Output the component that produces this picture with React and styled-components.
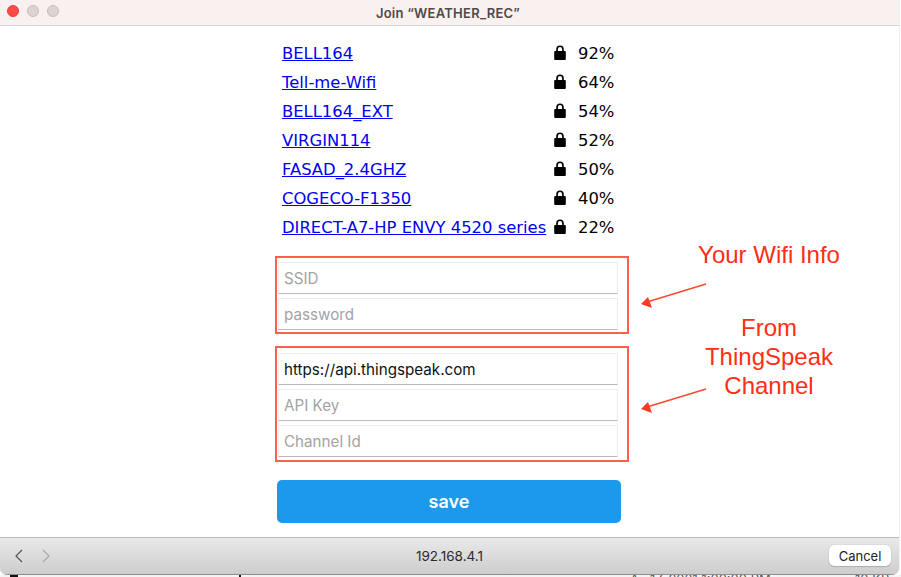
import React from 'react';
import styled, { createGlobalStyle } from 'styled-components';

const Global = createGlobalStyle`
  html, body { margin: 0; padding: 0; background: #fff; }
  body { width: 901px; height: 577px; overflow: hidden; font-family: "Inter", "Liberation Sans", sans-serif; }
`;

const Page = styled.div`
  position: relative;
  width: 901px;
  height: 577px;
  overflow: hidden;
  background: #fff;
`;

const Backdrop = styled.div`
  display: flex;
  height: 2px;
  overflow: hidden;
  background: #f4f4f4;
  font: 13px/8px "Inter", sans-serif;
  color: #555;
`;

const BackdropMark = styled.span`
  flex: 0 0 ${p => p.$w}px;
  margin-left: ${p => p.$ml}px;
  background: #111;
`;

const BackdropLabel = styled.span`
  flex: 0 0 ${p => p.$w}px;
  margin-left: ${p => p.$ml}px;
  white-space: nowrap;
`;

const Window = styled.div`
  width: 899px;
  height: 575px;
  display: flex;
  flex-direction: column;
  border-radius: 0 0 8px 8px;
  overflow: hidden;
  box-shadow: 0 0 1px rgba(0,0,0,.6);
`;

const TitleBar = styled.header`
  position: relative;
  flex: 0 0 26px;
  box-sizing: border-box;
  padding-right: 3px;
  display: flex;
  align-items: center;
  justify-content: center;
  background: #f9f1ef;
  border-bottom: 1px solid #d9d5d6;
  font: 600 13px "Inter", "Liberation Sans", sans-serif;
  letter-spacing: 0.25px;
  color: #4e4a4a;
`;

const Lights = styled.div`
  position: absolute;
  left: 7px;
  top: 5px;
  display: flex;
  gap: 8px;
`;

const Light = styled.span`
  width: 12px;
  height: 12px;
  box-sizing: border-box;
  border-radius: 50%;
  background: ${p => (p.$on ? '#fd4b46' : '#dbd4d3')};
  border: 1px solid ${p => (p.$on ? '#e5403b' : '#c4bdbc')};
`;

const Body = styled.main`
  flex: 1;
  background: #fff;
  display: flex;
  flex-direction: column;
  padding: 13px 0 0 277px;
`;

const NetworkList = styled.ul`
  list-style: none;
  margin: 0;
  padding: 0 0 0 5px;
`;

const Network = styled.li`
  display: grid;
  grid-template-columns: 272px 24px 1fr;
  align-items: center;
  height: 29px;
  font: 16.4px "DejaVu Sans", Verdana, sans-serif;
  color: #000;
`;

const NetworkLink = styled.a`
  color: #0000ee;
  text-decoration: underline;
  white-space: nowrap;
`;

const Lock = styled.svg`
  width: 12px;
  height: 15px;
  fill: #000;
  margin-top: -2px;
`;

const FieldGroup = styled.div`
  display: flex;
  flex-direction: column;
  gap: 4px;
  margin-top: ${p => p.$mt}px;
`;

const Field = styled.input`
  box-sizing: border-box;
  width: 340px;
  height: 32px;
  margin-left: 1px;
  padding: 0 5px;
  border: 1px solid #ececec;
  border-bottom: 1px solid #b9b9b9;
  border-radius: 1px;
  outline: none;
  font: 15.2px "Inter", "Liberation Sans", sans-serif;
  color: #111;
  &::placeholder { color: #a3a3a3; opacity: 1; }
`;

const SaveButton = styled.button`
  width: 344px;
  height: 43px;
  margin-top: 23px;
  border: 0;
  border-radius: 5px;
  background: #1c99ea;
  color: #fff;
  font: 600 18px "Inter", "Liberation Sans", sans-serif;
`;

const Footer = styled.footer`
  position: relative;
  flex: 0 0 38px;
  box-sizing: border-box;
  display: flex;
  align-items: center;
  justify-content: center;
  border-top: 1px solid #bdbdbd;
  border-bottom: 1px solid #8e8e8e;
  background: linear-gradient(#e9e9e9, #cdcdcd);
  font: 13.5px "Inter", "Liberation Sans", sans-serif;
  color: #2b2b2b;
`;

const NavButtons = styled.div`
  position: absolute;
  left: 14px;
  top: 11px;
  display: flex;
  gap: 17px;
`;

const Chevron = styled.svg`
  width: 10px;
  height: 14px;
  fill: none;
  stroke: ${p => p.$dim ? '#a9a9a9' : '#555'};
  stroke-width: 1.2;
`;

const CancelButton = styled.button`
  position: absolute;
  right: 8px;
  top: 7px;
  width: 62px;
  height: 21px;
  padding: 0;
  border: 0;
  border-radius: 5px;
  background: #fff;
  box-shadow: 0 0 1px rgba(0,0,0,.35), 0 1px 1px rgba(0,0,0,.15);
  font: 13px "Inter", "Liberation Sans", sans-serif;
  color: #222;
`;

const RedBox = styled.div`
  position: absolute;
  left: 275px;
  top: ${p => p.$top}px;
  width: 354px;
  height: ${p => p.$h}px;
  box-sizing: border-box;
  border: 2px solid #f9604d;
  pointer-events: none;
`;

const Note = styled.div`
  position: absolute;
  left: 670px;
  top: ${p => p.$top}px;
  width: 198px;
  text-align: center;
  font: 24px/29px "Liberation Sans", Arial, sans-serif;
  color: #ff2e14;
`;

const ArrowLayer = styled.svg`
  position: absolute;
  left: 630px;
  top: ${p => p.$top}px;
  width: 90px;
  height: 40px;
`;

const networks = [
  ['BELL164', '92%'],
  ['Tell-me-Wifi', '64%'],
  ['BELL164_EXT', '54%'],
  ['VIRGIN114', '52%'],
  ['FASAD_2.4GHZ', '50%'],
  ['COGECO-F1350', '40%'],
  ['DIRECT-A7-HP ENVY 4520 series', '22%'],
];

const Arrow = ({ top }) => (
  <ArrowLayer $top={top} viewBox="0 0 90 40">
    <line x1="76" y1="10" x2="17" y2="28" stroke="#ff4a33" strokeWidth="1.7" />
    <polygon points="11,30 18,23 22,34" fill="#ff3a22" />
  </ArrowLayer>
);

export default function App() {
  return (
    <Page>
      <Global />
      <Window>
        <TitleBar>
          <Lights>
            <Light $on />
            <Light />
            <Light />
          </Lights>
          Join “WEATHER_REC”
        </TitleBar>
        <Body>
          <NetworkList>
            {networks.map(([name, pct]) => (
              <Network key={name}>
                <NetworkLink href="#">{name}</NetworkLink>
                <Lock viewBox="0 0 12 15">
                  <path d="M2.2 6V4.2a3.8 3.8 0 0 1 7.6 0V6h1a1 1 0 0 1 1 1v7a1 1 0 0 1-1 1H1.2a1 1 0 0 1-1-1V7a1 1 0 0 1 1-1zM3.9 6h4.2V4.2a2.1 2.1 0 0 0-4.2 0z" />
                </Lock>
                <span>{pct}</span>
              </Network>
            ))}
          </NetworkList>
          <FieldGroup $mt={20}>
            <Field placeholder="SSID" />
            <Field placeholder="password" />
          </FieldGroup>
          <FieldGroup $mt={23}>
            <Field defaultValue="https://api.thingspeak.com" />
            <Field placeholder="API Key" />
            <Field placeholder="Channel Id" />
          </FieldGroup>
          <SaveButton>save</SaveButton>
        </Body>
        <Footer>
          <NavButtons>
            <Chevron viewBox="0 0 10 14"><path d="M8 1 2 7l6 6" /></Chevron>
            <Chevron $dim viewBox="0 0 10 14"><path d="M2 1l6 6-6 6" /></Chevron>
          </NavButtons>
          192.168.4.1
          <CancelButton>Cancel</CancelButton>
        </Footer>
      </Window>
      <Backdrop>
        <BackdropMark $ml={10} $w={8} />
        <BackdropMark $ml={221} $w={2} />
        <BackdropLabel $ml={389} $w={12}>A</BackdropLabel>
        <BackdropLabel $ml={8} $w={205}>17, 2021 1:00:00 PM</BackdropLabel>
        <BackdropLabel $ml={0} $w={40}>10 KB</BackdropLabel>
      </Backdrop>
      <RedBox $top={256} $h={78} />
      <RedBox $top={346} $h={116} />
      <Note $top={240}>Your Wifi Info</Note>
      <Note $top={313}>From<br />ThingSpeak<br />Channel</Note>
      <Arrow top={274} />
      <Arrow top={379} />
    </Page>
  );
}
